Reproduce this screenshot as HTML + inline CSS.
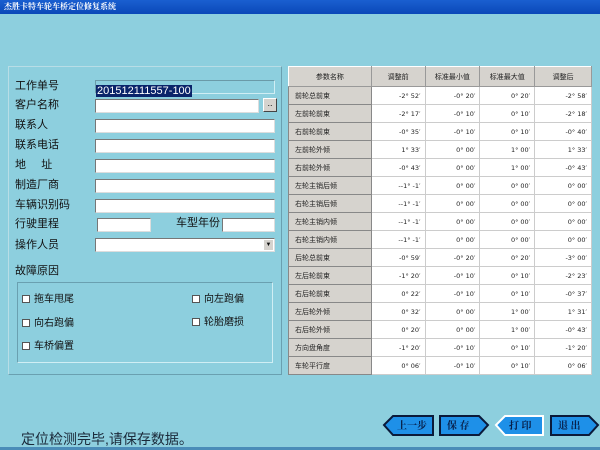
<!DOCTYPE html>
<html><head><meta charset="utf-8"><style>
*{margin:0;padding:0;box-sizing:border-box}
body{width:600px;height:450px;background:#8dcfde;position:relative;overflow:hidden;font-family:"Liberation Sans","Noto Sans CJK SC",sans-serif;color:#111}
.title{position:absolute;left:0;top:0;width:600px;height:14px;background:linear-gradient(#1a5fd0,#0a48b8);color:#fff;font-size:8px;font-weight:bold;line-height:14px;padding-left:4px;font-family:"Noto Serif CJK SC",serif}
.panel{position:absolute;left:8px;top:66px;width:274px;height:309px;border:1px solid #b8dde6;border-right-color:#6aa0b0;border-bottom-color:#6aa0b0}
.lbl{position:absolute;left:15px;font-size:11px;line-height:14px}
.inp{position:absolute;height:14px;background:#fff;border:1px solid #777;border-right-color:#ddd;border-bottom-color:#ddd}
.fault{position:absolute;left:17px;top:282px;width:256px;height:81px;border:1px solid #6aa0b0;border-right-color:#d0eef4;border-bottom-color:#d0eef4}
.cb{position:absolute;font-size:10px;line-height:10px}
.cb i{display:inline-block;width:8px;height:8px;background:#fff;border:1px solid #555;margin-right:4px;vertical-align:-1px}
table{position:absolute;left:288px;top:66px;width:304px;border-collapse:collapse;font-size:7px;background:#fff;font-family:"Noto Sans CJK SC",sans-serif}
td{height:18px;border:1px solid #ccc;text-align:right;padding-right:4px;color:#222;font-family:"DejaVu Sans","Noto Sans CJK SC",sans-serif;font-size:6.5px}
td:first-child{background:#d6d3ce;text-align:left;padding-left:6px;border:1px solid #888;border-top-color:#fff;font-family:"Noto Sans CJK SC",sans-serif;font-size:7px}
tr.h td{height:20px;background:#d6d3ce;text-align:center;padding:0;border:1px solid #999;border-top-color:#fff;border-left-color:#fff;font-family:"Noto Sans CJK SC",sans-serif;font-size:7px}
.status{position:absolute;left:21px;top:429px;font-size:14px;color:#1a2a3a}
.bline{position:absolute;left:0;top:447px;width:600px;height:3px;background:#4a8cb8}
svg text{font-family:"Noto Serif CJK SC",serif;font-size:10px;font-weight:bold;fill:#08204a}
</style></head><body>
<div class="title">杰胜卡特车轮车桥定位修复系统</div>
<div class="panel"></div>
<div class="lbl" style="top:79px">工作单号</div>
<div class="inp" style="left:95px;top:80px;width:180px;background:#8dcfde;border-color:#6a9aa8 #d0eef4 #d0eef4 #6a9aa8"><span style="background:#0a246a;color:#fff;font-size:11px;line-height:12px;display:inline-block;padding:0 1px">201512111557-100</span></div>
<div class="lbl" style="top:98px">客户名称</div><div class="inp" style="left:95px;top:99px;width:164px"></div>
<div style="position:absolute;left:263px;top:98px;width:14px;height:14px;background:#d6d3ce;border:1px solid #fff;border-right-color:#444;border-bottom-color:#444;font-size:9px;text-align:center;line-height:9px">..</div>
<div class="lbl" style="top:118px">联系人</div><div class="inp" style="left:95px;top:119px;width:180px"></div>
<div class="lbl" style="top:138px">联系电话</div><div class="inp" style="left:95px;top:139px;width:180px"></div>
<div class="lbl" style="top:158px">地&nbsp;&nbsp;&nbsp;&nbsp;&nbsp;址</div><div class="inp" style="left:95px;top:159px;width:180px"></div>
<div class="lbl" style="top:178px">制造厂商</div><div class="inp" style="left:95px;top:179px;width:180px"></div>
<div class="lbl" style="top:198px">车辆识别码</div><div class="inp" style="left:95px;top:199px;width:180px"></div>
<div class="lbl" style="top:217px">行驶里程</div><div class="inp" style="left:97px;top:218px;width:54px"></div>
<div class="lbl" style="top:216px;left:176px">车型年份</div><div class="inp" style="left:222px;top:218px;width:53px"></div>
<div class="lbl" style="top:238px">操作人员</div><div class="inp" style="left:95px;top:238px;width:180px"><div style="position:absolute;right:1px;top:1px;width:9px;height:10px;background:#d6d3ce;font-size:6px;text-align:center;line-height:10px">▼</div></div>
<div class="lbl" style="top:264px">故障原因</div>
<div class="fault"></div>
<div class="cb" style="left:22px;top:295px"><i></i>拖车甩尾</div>
<div class="cb" style="left:192px;top:295px"><i></i>向左跑偏</div>
<div class="cb" style="left:22px;top:319px"><i></i>向右跑偏</div>
<div class="cb" style="left:192px;top:318px"><i></i>轮胎磨损</div>
<div class="cb" style="left:22px;top:342px"><i></i>车桥偏置</div>
<table>
<colgroup><col style="width:83px"><col style="width:54px"><col style="width:55px"><col style="width:55px"><col style="width:57px"></colgroup>
<tr class="h"><td>参数名称</td><td>调整前</td><td>标准最小值</td><td>标准最大值</td><td>调整后</td></tr>
<tr><td>前轮总前束</td><td>-2° 52′</td><td>-0° 20′</td><td>0° 20′</td><td>-2° 58′</td></tr>
<tr><td>左前轮前束</td><td>-2° 17′</td><td>-0° 10′</td><td>0° 10′</td><td>-2° 18′</td></tr>
<tr><td>右前轮前束</td><td>-0° 35′</td><td>-0° 10′</td><td>0° 10′</td><td>-0° 40′</td></tr>
<tr><td>左前轮外倾</td><td>1° 33′</td><td>0° 00′</td><td>1° 00′</td><td>1° 33′</td></tr>
<tr><td>右前轮外倾</td><td>-0° 43′</td><td>0° 00′</td><td>1° 00′</td><td>-0° 43′</td></tr>
<tr><td>左轮主销后倾</td><td>--1° -1′</td><td>0° 00′</td><td>0° 00′</td><td>0° 00′</td></tr>
<tr><td>右轮主销后倾</td><td>--1° -1′</td><td>0° 00′</td><td>0° 00′</td><td>0° 00′</td></tr>
<tr><td>左轮主销内倾</td><td>--1° -1′</td><td>0° 00′</td><td>0° 00′</td><td>0° 00′</td></tr>
<tr><td>右轮主销内倾</td><td>--1° -1′</td><td>0° 00′</td><td>0° 00′</td><td>0° 00′</td></tr>
<tr><td>后轮总前束</td><td>-0° 59′</td><td>-0° 20′</td><td>0° 20′</td><td>-3° 00′</td></tr>
<tr><td>左后轮前束</td><td>-1° 20′</td><td>-0° 10′</td><td>0° 10′</td><td>-2° 23′</td></tr>
<tr><td>右后轮前束</td><td>0° 22′</td><td>-0° 10′</td><td>0° 10′</td><td>-0° 37′</td></tr>
<tr><td>左后轮外倾</td><td>0° 32′</td><td>0° 00′</td><td>1° 00′</td><td>1° 31′</td></tr>
<tr><td>右后轮外倾</td><td>0° 20′</td><td>0° 00′</td><td>1° 00′</td><td>-0° 43′</td></tr>
<tr><td>方向盘角度</td><td>-1° 20′</td><td>-0° 10′</td><td>0° 10′</td><td>-1° 20′</td></tr>
<tr><td>车轮平行度</td><td>0° 06′</td><td>-0° 10′</td><td>0° 10′</td><td>0° 06′</td></tr>
</table>
<div class="status">定位检测完毕,请保存数据。</div>
<div class="bline"></div>
<svg style="position:absolute;left:0;top:0" width="600" height="450">
<polygon points="384,425 393,416 433,416 433,435 393,435" fill="#1e90e8" stroke="#0a1a3a" stroke-width="2"/>
<text x="397" y="429">上一步</text>
<polygon points="440,416 479,416 488,425 479,435 440,435" fill="#1e90e8" stroke="#0a1a3a" stroke-width="2"/>
<text x="447" y="429">保 存</text>
<polygon points="496,425 505,416 543,416 543,435 505,435" fill="#1e90e8" stroke="#fff" stroke-width="2"/>
<text x="509" y="429">打 印</text>
<polygon points="551,416 589,416 598,425 589,435 551,435" fill="#1e90e8" stroke="#0a1a3a" stroke-width="2"/>
<text x="558" y="429">退 出</text>
</svg>
</body></html>
